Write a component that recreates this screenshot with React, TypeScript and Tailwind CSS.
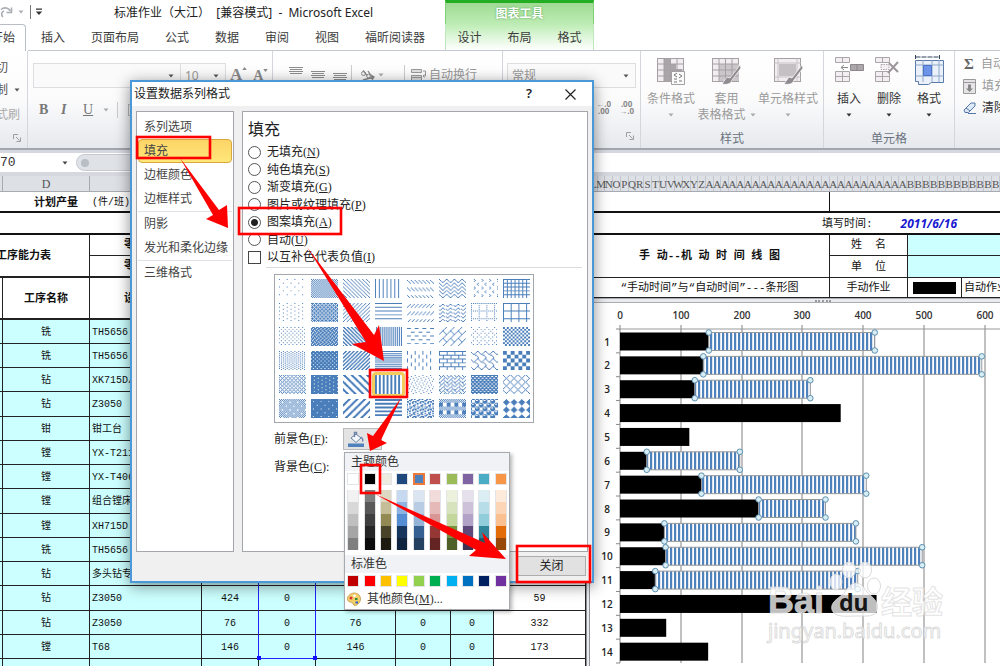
import React, { useState } from "react";
import clsx from "clsx";

const ui = "font-['Noto_Sans','Noto_Sans_CJK_SC',sans-serif]";
const song = "font-['Liberation_Serif','Noto_Sans_CJK_SC',serif]";
const cellFont = "font-['Liberation_Mono','Noto_Sans_CJK_SC',monospace]";

function Caret({ className = "text-[#555]" }: { className?: string }) {
  return (
    <svg viewBox="0 0 6 4" className={clsx("h-1 w-1.5 shrink-0", className)} fill="currentColor" aria-hidden="true">
      <path d="M0.5 0.5h5L3 3.5z" />
    </svg>
  );
}

function Launcher() {
  return (
    <svg viewBox="0 0 8 8" className="size-2" fill="none" stroke="#9a9da2" aria-hidden="true">
      <path d="M0.5 5V0.5H5M3 3l3.5 3.5M7.500 3.500v4h-4" />
    </svg>
  );
}

/* ---------- Title bar and tabs ---------- */

const tabs = ["插入", "页面布局", "公式", "数据", "审阅", "视图", "福昕阅读器"];
const chartTabs = ["设计", "布局", "格式"];

function Header() {
  return (
    <header className={clsx("flex h-[51px] shrink-0 bg-white text-[12px] text-[#3c3c3c]", ui)}>
      <div className="flex w-[445px] shrink-0 flex-col">
        <div className="flex h-6 items-center whitespace-nowrap">
          <svg viewBox="0 0 14 12" className="h-3 w-3.5" fill="none" stroke="#a9adb3" strokeWidth="1.6" aria-hidden="true">
            <path d="M1 3.500C4 1 9 1.500 10 5M11.500 1.500v5H6.500M3 11c-2-2-2-5 1-6" />
          </svg>
          <Caret className="ml-1 text-[#a9adb3]" />
          <span className="ml-1.5 h-3.5 w-px bg-[#777]" />
          <svg viewBox="0 0 8 8" className="ml-1 size-2" fill="#333" aria-hidden="true">
            <path d="M1 0.500h6v1.200H1zM0.800 3.500h6.400L4 7z" />
          </svg>
          <h1 className="ml-[71px] pt-px text-[12px] text-[#222]">
            标准作业（大江）&nbsp; [兼容模式]&nbsp; -&nbsp; Microsoft Excel
          </h1>
        </div>
        <nav className="flex flex-1">
          <button className="-ml-[22px] mr-0.5 h-full shrink-0 rounded-t-sm border border-b-0 border-[#b9bec6] bg-white pl-3 pr-2.5">
            开始
          </button>
          {tabs.map((t) => (
            <button key={t} className="h-full shrink-0 whitespace-nowrap border-b border-[#c3c7cf] px-[13px] pt-0.5">
              {t}
            </button>
          ))}
          <span className="flex-1 border-b border-[#c3c7cf]" />
        </nav>
      </div>
      <div className="flex w-[149px] shrink-0 flex-col border-b border-[#c3c7cf]">
        <div className="flex h-6 items-center justify-center border-x border-t-3 border-x-[#7fd077] border-t-[#22ad22] bg-linear-to-b from-[#9fda94] to-[#bdecb4] font-bold text-white [text-shadow:0_0_2px_#4a9a46]">
          图表工具
        </div>
        <div className="flex flex-1 justify-center border-x border-[#bfe8ba] bg-linear-to-b from-[#bdecb4] to-white">
          {chartTabs.map((t) => (
            <button key={t} className="h-full shrink-0 whitespace-nowrap px-[13px] pt-0.5">
              {t}
            </button>
          ))}
        </div>
      </div>
      <div className="flex-1 border-b border-[#c3c7cf]" />
    </header>
  );
}

/* ---------- Ribbon ---------- */

function GridIcon({ kind }: { kind: "cond" | "table" | "cell" }) {
  return (
    <svg viewBox="0 0 30 28" className="h-7 w-[30px]" fill="none" stroke="#a5a0a4" aria-hidden="true">
      <rect x="1.500" y="1.500" width="26" height="23" fill="#f1edf0" />
      {kind === "cond" && <path d="M8 2h6v5h6v5h6v6H14v6H8z" fill="#a9a5a8" stroke="none" />}
      {kind === "table" && <path d="M8 7h20v17H8z" fill="#cac6c9" stroke="none" />}
      {kind !== "cell" && <path d="M8 1.500v23M14.500 1.500v23M21 1.500v23M1.500 7h26M1.500 13h26M1.500 19h26" />}
      {kind === "cell" && (
        <>
          <path d="M5 1.500v23M24 1.500v23M1.500 6h26M1.500 20h26" stroke="#c5c1c4" />
          <path d="M6 7h17v12H6z" fill="#c4c0c3" stroke="none" />
        </>
      )}
      {kind === "cond" ? (
        <>
          <path d="M15.500 14.500h13v13h-13z" fill="#fafafa" />
          <path d="M21 16l-3 2 3 2M23 17l3 2-3 2M18 22h3M18 25h3M23 24h3" stroke="#777" />
        </>
      ) : (
        <path d="M29 8L19 21l-3-1-5 7c5 1 9 0 10-4L30 11z" fill="#8f8c8f" stroke="#fff" strokeWidth="0.7" />
      )}
    </svg>
  );
}

function CellsIcon({ kind }: { kind: "insert" | "delete" | "format" }) {
  if (kind === "format")
    return (
      <svg viewBox="0 0 30 30" className="size-[30px]" fill="none" stroke="#5a7aa8" aria-hidden="true">
        <path d="M1.500 0v4M25.500 0v4M1.500 2h24" stroke="#31445f" strokeDasharray="5 1" />
        <path d="M1.500 5.500h28v22h-12l-3 2h-10v-3h-3z" fill="#eaf1fa" />
        <path d="M1.500 10h28M1.500 21h28M9 5v22M18 5v22M25 5v22" stroke="#8fa8cb" />
        <path d="M9.500 10.500h8v10h-8z" fill="#6d94e8" stroke="#4a73c8" />
      </svg>
    );
  return (
    <svg viewBox="0 0 30 28" className="h-[30px] w-[30px]" fill="#f3eef1" stroke="#aaa5a9" aria-hidden="true">
      <path d="M1.500 1.500h14v5h-14zM8.500 1.500v5M1.500 15.500h14v10h-14zM8.500 15.500v10M1.500 20.500h14" />
      {kind === "insert" ? (
        <>
          <path d="M16.500 8.500h13v6h-13zM23 8.500v6" fill="#aba7aa" stroke="#8c888b" />
          <path d="M14 11.500H7M10 9l-3 2.500 3 2.500" fill="none" stroke="#888" />
        </>
      ) : (
        <>
          <path d="M7 8.500h8v5H7z" strokeDasharray="1.500 1" />
          <path d="M15 7l9 9M24 6l-10 11" fill="none" stroke="#9b979a" strokeWidth="2" />
        </>
      )}
    </svg>
  );
}

function BigButton({ icon, lines, muted }: { icon: React.ReactNode; lines: string[]; muted?: boolean }) {
  return (
    <button className={clsx("flex flex-col items-center whitespace-nowrap", muted ? "text-[#9a9a9a]" : "text-[#333]")}>
      {icon}
      <span className="mt-1.5 leading-4">{lines[0]}</span>
      {lines[1] ? (
        <span className="flex items-center gap-1 leading-4">
          {lines[1]}
          <Caret className="text-[#aaa]" />
        </span>
      ) : (
        <span className="flex h-4 items-center">
          <Caret className={muted ? "text-[#aaa]" : "text-[#333]"} />
        </span>
      )}
    </button>
  );
}

function Combo({ label, value, className }: { label: string; value: string; className: string }) {
  return (
    <label className={clsx("flex h-[25px] items-center border border-[#dcdee2] bg-[#fafafa] pl-1 pr-1.5", className)}>
      <select aria-label={label} className="h-full min-w-0 flex-1 appearance-none bg-transparent text-[12px] text-[#999]">
        <option>{value}</option>
      </select>
      <Caret />
    </label>
  );
}

function AlignIcon({ className }: { className: string }) {
  return (
    <svg viewBox="0 0 14 8" className={clsx("h-2 w-3.5", className)} stroke="#8e8e8e" aria-hidden="true">
      <path d="M0 0.500h14M1 2.500h12M0 4.500h14M1 6.500h12" />
    </svg>
  );
}

const group = "flex shrink-0 flex-col border-r border-[#d3d6db]";

function Ribbon() {
  return (
    <section
      className={clsx(
        "flex h-[99px] shrink-0 overflow-hidden border-b-2 border-[#a3a7ad] bg-linear-to-b from-white via-[#fbfbfc] to-[#e6e9ed] text-[12px]",
        ui
      )}
    >
      <div className={clsx(group, "w-7 overflow-hidden pt-2 text-[#555]")}>
        <button className="-ml-4 flex h-4 w-10">剪切</button>
        <button className="-ml-4 mt-[7px] flex h-4 w-12 items-center gap-1.5">
          复制
          <Caret />
        </button>
        <button className="-ml-4 mt-2 flex h-4 w-12 text-[#aaa]">格式刷</button>
        <span className="mr-1.5 mt-3 self-end">
          <Launcher />
        </span>
      </div>

      <div className={clsx(group, "w-[245px] pl-[5px] pt-3")}>
        <div className="flex items-start">
          <Combo label="字体" value="" className="w-[148px]" />
          <Combo label="字号" value="10" className="w-[45px] border-l-0" />
          <button className="ml-1 flex items-start font-['Liberation_Serif',serif] text-[17px] font-bold leading-6 text-[#8a8a8a]">
            A
            <svg viewBox="0 0 6 4" className="mt-1 h-[3px] w-[5px]" fill="currentColor" aria-hidden="true">
              <path d="M0 4h6L3 0z" />
            </svg>
          </button>
          <button className="ml-1.5 flex items-start font-['Liberation_Serif',serif] text-[14px] font-bold leading-[26px] text-[#8a8a8a]">
            A
            <svg viewBox="0 0 6 4" className="mt-1.5 h-[3px] w-[5px]" fill="currentColor" aria-hidden="true">
              <path d="M0 0h6L3 4z" />
            </svg>
          </button>
        </div>
        <div className="mt-2.5 flex items-center pl-1.5 font-['Liberation_Serif',serif] text-[14px] text-[#777]">
          <button className="w-[22px] text-left font-bold">B</button>
          <button className="w-[22px] text-left font-bold italic">I</button>
          <button className="w-5 text-left underline">U</button>
          <Caret className="text-[#aaa]" />
          <span className="ml-2 h-4 w-px bg-[#ccc]" />
          <span className="ml-2.5 size-3 border border-[#bbb]" />
        </div>
      </div>

      <div className={clsx(group, "w-[230px] pl-4 pt-3")}>
        <div className="flex h-6 items-center">
          <AlignIcon className="mb-2" />
          <AlignIcon className="ml-2" />
          <AlignIcon className="-mb-1 ml-2" />
          <span className="ml-1 h-5 w-px bg-[#ccc]" />
          <svg viewBox="0 0 16 14" className="ml-2 h-3.5 w-4" fill="none" stroke="#8a8a8a" aria-hidden="true">
            <circle cx="3.500" cy="5.500" r="2" />
            <path d="M3 2.500l4 5M8 3l4 6M3 12l11-3M11 7l3 2-2 3" strokeWidth="1.300" />
            <circle cx="8.500" cy="8" r="1.800" />
          </svg>
          <Caret className="ml-0.5 text-[#aaa]" />
          <span className="ml-5 h-5 w-px bg-[#ccc]" />
          <button className="ml-1.5 flex items-center gap-0.5 whitespace-nowrap text-[#999]">
            <svg viewBox="0 0 16 14" className="h-3.5 w-4" fill="#e2e2e2" stroke="#999" aria-hidden="true">
              <path d="M0.500 1.500h10v3h-10zM0.500 7.500h10v2h-10zM0.500 9.500h10v3h-10z" />
              <path d="M12 3h2.500v5H12M13.500 6.500L12 8l1.500 1.500" fill="none" />
            </svg>
            自动换行
          </button>
        </div>
      </div>

      <div className={clsx(group, "w-[138px] px-1 pt-3")}>
        <Combo label="数字格式" value="常规" className="w-full" />
        <div className="mt-3 flex justify-end gap-2 pr-0.5 font-['Noto_Sans',sans-serif] text-[8px] font-bold leading-[7px] text-[#8a8a8a]">
          <button>
            ←.0
            <br />
            .00
          </button>
          <button>
            .00
            <br />
            →.0
          </button>
        </div>
        <span className="mr-0.5 mt-auto self-end pb-2">
          <Launcher />
        </span>
      </div>

      <div className={clsx(group, "w-[183px] pt-1.5")}>
        <div className="flex flex-1 justify-between pl-1.5 pr-[5px]">
          <BigButton muted icon={<GridIcon kind="cond" />} lines={["条件格式"]} />
          <BigButton muted icon={<GridIcon kind="table" />} lines={["套用", "表格格式"]} />
          <BigButton muted icon={<GridIcon kind="cell" />} lines={["单元格样式"]} />
        </div>
        <div className="h-[17px] text-center leading-4 text-[#6b7280]">样式</div>
      </div>

      <div className={clsx(group, "w-[131px] pt-1")}>
        <div className="flex flex-1 justify-between px-2.5">
          <BigButton icon={<CellsIcon kind="insert" />} lines={["插入"]} />
          <BigButton icon={<CellsIcon kind="delete" />} lines={["删除"]} />
          <BigButton icon={<CellsIcon kind="format" />} lines={["格式"]} />
        </div>
        <div className="h-[17px] text-center leading-4 text-[#6b7280]">单元格</div>
      </div>

      <div className="flex min-w-0 flex-1 flex-col gap-1 overflow-hidden pl-2 pt-1 text-[#999]">
        <button className="flex h-[18px] items-center gap-1.5 whitespace-nowrap">
          <span className="w-3 shrink-0 text-center font-['Liberation_Serif',serif] text-[15px] font-bold text-[#666]">Σ</span>
          自动求和
        </button>
        <button className="flex h-[18px] items-center gap-1.5 whitespace-nowrap">
          <svg viewBox="0 0 13 15" className="h-[15px] w-[13px] shrink-0" fill="#e6e4e6" stroke="#999" aria-hidden="true">
            <path d="M0.500 0.500h12v14h-12zM0.500 3.500h12" />
            <path d="M5 5.500h3v4h2l-3.500 3.500L3 9.500h2z" fill="#888" stroke="none" />
          </svg>
          填充
        </button>
        <button className="flex h-[18px] items-center gap-1.5 whitespace-nowrap text-[#333]">
          <svg viewBox="0 0 13 12" className="h-3 w-[13px] shrink-0" fill="#dfeaf8" stroke="#5577a8" aria-hidden="true">
            <path d="M1 8l7-7h4v3l-6.500 6.500H2z" />
            <path d="M3 6l4 3M5 11.500h8" />
          </svg>
          清除
        </button>
      </div>
    </section>
  );
}

function FormulaBar() {
  return (
    <div className="flex h-[26px] shrink-0 items-center border-b-4 border-t-3 border-[#d5d9df] bg-white">
      <input
        aria-label="名称框"
        defaultValue="70"
        className="h-full w-[62px] text-[13px] text-[#333] outline-none font-['Liberation_Mono',monospace]"
      />
      <Caret className="text-[#444]" />
      <div className="ml-2 flex h-[17px] w-[510px] items-center rounded-l-full border border-[#c5c9cf] bg-[#dfe2e7] pl-1">
        <span className="size-2 rounded-full bg-[#b9bdc4]" />
      </div>
      <input aria-label="编辑栏" className="h-full min-w-0 flex-1 bg-white outline-none" />
    </div>
  );
}

/* ---------- Worksheet, left pane ---------- */

type Row = [string, string, string?, string?, string?, string?, string?, string?];

const rows: Row[] = [
  ["铣", "TH5656"],
  ["铣", "TH5656"],
  ["钻", "XK715D/1"],
  ["钻", "Z3050"],
  ["钳", "钳工台"],
  ["镗", "YX-T211"],
  ["镗", "YX-T406"],
  ["镗", "组合镗床"],
  ["镗", "XH715D"],
  ["铣", "TH5656"],
  ["钻", "多头钻专机"],
  ["钻", "Z3050", "424", "0", "424", "0", "0", "59"],
  ["钻", "Z3050", "76", "0", "76", "0", "0", "332"],
  ["镗", "T68", "146", "0", "146", "0", "0", "173"],
  ["", ""],
];

const line = "border-b border-r border-[#222]";

function LeftPane() {
  return (
    <div className="w-[586px] shrink-0 overflow-hidden">
      <table className={clsx("w-[586px] table-fixed border-separate border-spacing-0 text-[10px] leading-3 text-[#111]", cellFont)}>
        <colgroup>
          <col className="w-[3px]" />
          <col className="w-[87px]" />
          <col className="w-28" />
          <col className="w-[57px]" />
          <col className="w-[57px]" />
          <col className="w-20" />
          <col className="w-[55px]" />
          <col className="w-[43px]" />
          <col className="w-[92px]" />
        </colgroup>
        <thead>
          <tr className="h-4 bg-[#dde0e5] font-['Liberation_Serif',serif] text-[12px] text-[#555]">
            {["", "D", "E", "F", "G", "H", "I", "J", "K"].map((c, i) => (
              <th key={i} className="border-b border-r border-[#a8acb2] p-0 font-normal">
                {c}
              </th>
            ))}
          </tr>
        </thead>
        <tbody>
          <tr className="h-[21px] bg-white text-[11px]">
            <td colSpan={2} className="border-b-2 border-[#111] p-0 pr-3 pt-0.5 text-right font-bold">
              计划产量
            </td>
            <td colSpan={7} className="border-b-2 border-[#111] p-0 pl-0.5 pt-0.5 text-[10px]">
              (件/班)
            </td>
          </tr>
          <tr className="h-[22px] bg-white">
            <td colSpan={9} className="border-b-2 border-[#111] p-0" />
          </tr>
          <tr className="h-[21px] bg-white text-[11px] font-bold">
            <td rowSpan={2} colSpan={2} className={clsx(line, "whitespace-nowrap border-b-2 p-0 -indent-1")}>
              工序能力表
            </td>
            <td colSpan={7} className={clsx(line, "p-0 pl-[34px]")}>
              零件名称
            </td>
          </tr>
          <tr className="h-[22px] bg-white text-[11px] font-bold">
            <td colSpan={7} className={clsx(line, "border-b-2 p-0 pl-[34px]")}>
              零件号
            </td>
          </tr>
          <tr className="h-[42px] bg-white text-center text-[11px] font-bold">
            <td className={clsx(line, "border-b-2 p-0")} />
            <td className={clsx(line, "border-b-2 p-0 pt-0.5")}>工序名称</td>
            <td className={clsx(line, "border-b-2 p-0 pl-[34px] pt-0.5 text-left")}>设备编号</td>
            <td colSpan={6} className={clsx(line, "border-b-2 p-0")} />
          </tr>
          {rows.map((r, i) => (
            <tr key={i} className={clsx("bg-[#ccffff] text-center", i % 4 === 3 ? "h-[25px]" : "h-6")}>
              <td className={clsx(line, "p-0")} />
              {Array.from({ length: 8 }, (_, c) => (
                <td
                  key={c}
                  className={clsx(
                    "border-b p-0 pt-0.5",
                    c === 1 && "whitespace-nowrap pl-0.5 text-left",
                    c === 7 && "bg-white",
                    (c === 2 || c === 3) && i < 14 ? "border-r border-r-[#2222ff]" : "border-r border-r-[#222]",
                    i === 13 && c === 3 ? "border-b-[#2222ff]" : "border-b-[#222]",
                    i === 13 && c === 3 && "relative"
                  )}
                >
                  {r[c] ?? ""}
                  {i === 13 && c === 3 && (
                    <>
                      <span className="absolute -bottom-0.5 -left-0.5 size-1 bg-[#1111ff]" />
                      <span className="absolute -bottom-0.5 -right-0.5 size-1 bg-[#1111ff]" />
                    </>
                  )}
                </td>
              ))}
            </tr>
          ))}
        </tbody>
      </table>
    </div>
  );
}

/* ---------- Worksheet, right pane ---------- */

const columnLetters = ("LMNOPQRSTUVWXYZ" + "A".repeat(26) + "B".repeat(12)).split("");

function RightTable() {
  const b = "border-b border-r border-[#222] p-0";
  return (
    <table className={clsx("w-full table-fixed border-separate border-spacing-0 bg-white text-[11px] leading-3 text-[#111]", cellFont)}>
      <colgroup>
        <col className="w-[240px]" />
        <col className="w-[78px]" />
        <col className="w-[54px]" />
        <col />
      </colgroup>
      <tbody>
        <tr className="h-[21px]">
          <td className="border-b-2 border-r border-[#111] p-0" />
          <td colSpan={3} className="border-b-2 border-[#111] p-0" />
        </tr>
        <tr className="h-[22px]">
          <td colSpan={4} className="border-b-2 border-[#111] p-0 pt-0.5">
            <div className="flex gap-7 whitespace-nowrap pl-[232px]">
              <span>填写时间:</span>
              <span className="font-['Noto_Sans',sans-serif] text-[12px] font-bold italic text-[#1818d0]">2011/6/16</span>
            </div>
          </td>
        </tr>
        <tr className="h-[21px] text-center">
          <td rowSpan={2} className={clsx(b, "whitespace-pre font-bold")}>
            手 动--机 动 时 间 线 图
          </td>
          <td className={clsx(b, "whitespace-pre")}>姓  名</td>
          <td colSpan={2} className="border-b border-[#222] bg-[#ccffff] p-0" />
        </tr>
        <tr className="h-[22px] text-center">
          <td className={clsx(b, "whitespace-pre")}>单  位</td>
          <td colSpan={2} className="border-b border-[#222] bg-[#ccffff] p-0" />
        </tr>
        <tr className="h-5 text-center">
          <td className={clsx(b, "whitespace-nowrap")}>“手动时间”与“自动时间”---条形图</td>
          <td className={b}>手动作业</td>
          <td className={b}>
            <div className="mx-auto h-3 w-[43px] bg-black" />
          </td>
          <td className="overflow-hidden whitespace-nowrap border-b border-[#222] p-0 pl-0.5 text-left">自动作业</td>
        </tr>
      </tbody>
    </table>
  );
}

// [manual time, end of automatic time]
const bars: [number, number?][] = [
  [146, 419],
  [137, 595],
  [123, 313],
  [363],
  [114],
  [44, 197],
  [134, 405],
  [228, 338],
  [73, 388],
  [75, 497],
  [58, 391],
  [422],
  [76],
  [145],
];

const X0 = 30;
const UNIT = 0.608;
const ROW = 23.86;

function Chart() {
  return (
    <svg role="img" aria-label="条形图" className="h-[364px] w-full bg-white font-['Open_Sans',sans-serif] text-[10px] font-semibold">
      <defs>
        <pattern id="dark-vertical" width="4" height="4" patternUnits="userSpaceOnUse">
          <rect width="4" height="4" fill="#fff" />
          <rect width="2" height="4" fill="#4f81bd" />
          <rect x="2" width="0.500" height="4" fill="#b9cde5" />
        </pattern>
      </defs>
      {[0, 1, 2, 3, 4, 5, 6].map((n) => {
        const x = Math.round(X0 + n * 100 * UNIT);
        return (
          <g key={n}>
            <path d={`M${x} 22V360`} stroke="#a6a6a6" strokeWidth="1.400" />
            <text x={x} y="16" textAnchor="middle" fill="#333">
              {n * 100}
            </text>
          </g>
        );
      })}
      <path d={`M${X0} 26H2000`} stroke="#999" />
      {bars.map(([a, b], i) => {
        const y = 29.5 + i * ROW;
        const xa = X0 + a * UNIT;
        const xb = X0 + (b ?? 0) * UNIT;
        return (
          <g key={i}>
            <path d={`M${X0 - 4} ${26 + i * ROW}h4`} stroke="#888" />
            <text x="17" y={y + 13} textAnchor="middle" fill="#222">
              {i + 1}
            </text>
            <rect x={X0} y={y} width={a * UNIT} height="18" fill="#000" />
            {b && (
              <>
                <rect x={xa} y={y} width={xb - xa} height="18" fill="url(#dark-vertical)" stroke="#999" />
                {[
                  [xa, y],
                  [xb, y],
                  [xa, y + 18],
                  [xb, y + 18],
                ].map(([cx, cy], k) => (
                  <circle key={k} cx={cx} cy={cy} r="2.800" fill="#d9eef4" stroke="#5b8fb0" />
                ))}
              </>
            )}
          </g>
        );
      })}
      <path d="M26 360h4" stroke="#888" />
    </svg>
  );
}

function RightPane() {
  return (
    <div className="flex min-w-0 flex-1 flex-col">
      <div className="flex h-4 shrink-0 border-b border-[#a8acb2] bg-[#dde0e5] font-['Liberation_Serif',serif] text-[11px] leading-[17px] text-[#555]">
        {columnLetters.map((c, i) => (
          <span key={i} className="flex min-w-0 flex-1 justify-center border-r border-[#c3c6cc]">
            {c}
          </span>
        ))}
      </div>
      <RightTable />
      <div className="flex h-[5px] shrink-0 items-center justify-center border-y border-[#aaadb2] bg-[#e9ebee]">
        <span className="ml-14 w-4 border-t-2 border-dotted border-[#999]" />
      </div>
      <Chart />
    </div>
  );
}

/* ---------- Pattern swatches ---------- */

const patterns: string[][] = [
  ["x.......", "........", "........", "........", "....x...", "........", "........", "........"],
  ["x.", ".x"],
  ["x...", ".x..", "..x.", "...x"],
  ["x..."],
  ["........", "x...x...", ".x...x..", "..x...x.", "...x...x", "........", "........", "........"],
  ["x......x", ".x....x.", "..x..x..", "...xx..."],
  ["...x....", "....x...", "...x....", "........", ".......x", "......x.", ".......x", "........"],
  ["xxxx", "x...", "x...", "x..."],

  ["x.......", "........", "....x...", "........"],
  ["xxx.", ".x.x", "x.xx", ".x.x"],
  ["...x", "..x.", ".x..", "x..."],
  ["x", ".", ".", "."],
  ["........", "...x...x", "..x...x.", ".x...x..", "x...x...", "........", "........", "........"],
  ["........", "...xx...", "..x..x.x", "xx......"],
  ["x.x.x.x.", "........", "x.......", "........", "x.......", "........", "x.......", "........"],
  ["xxxxxxxx", "x.......", "x.......", "x.......", "x.......", "x.......", "x.......", "x......."],

  ["x...", "....", "..x.", "...."],
  [".xxx", "xx.x", "x.xx", "xxx."],
  ["xx..", ".xx.", "..xx", "x..x"],
  [".x"],
  ["........", "xxxx....", "........", "........", "........", "....xxxx", "........", "........"],
  [".......x", "......x.", ".....x..", "....x...", "...xx...", "..x..x..", ".x....x.", "x......x"],
  ["x.......", "........", "..x...x.", "........", "....x...", "........", "..x...x.", "........"],
  ["xx..", "xx..", "..xx", "..xx"],

  ["x...", "..x."],
  [".xxx", "xxxx", "xx.x", "xxxx"],
  ["..xx", ".xx.", "xx..", "x..x"],
  ["x", "."],
  ["x.......", "x.......", "x.......", "x.......", "....x...", "....x...", "....x...", "....x..."],
  ["xxxxxxxx", "x.......", "x.......", "x.......", "xxxxxxxx", "....x...", "....x...", "....x..."],
  ["......xx", "x....x..", ".x..x...", "..xx....", "....xx..", "......x.", ".......x", ".......x"],
  ["xxxx....", "xxxx....", "xxxx....", "xxxx....", "....xxxx", "....xxxx", "....xxxx", "....xxxx"],

  ["x.x.", ".x..", "x.x.", "...x"],
  ["xxxxxxxx", "xxx.xxxx", "xxxxxxxx", "xxxxxxx."],
  ["xxx.....", ".xxx....", "..xxx...", "...xxx..", "....xxx.", ".....xxx", "x.....xx", "xx.....x"],
  ["xx.."],
  ["x.......", "....x...", ".x......", "......x.", "...x....", ".......x", "..x.....", ".....x.."],
  ["x...x...", ".x.x.x..", "..x...x.", ".x...x.x", "x...x...", "...x.x..", "..x...x.", "xx...x.x"],
  ["xxxx", "x..x", "xxxx", ".xx."],
  ["x.....x.", ".x...x..", "..x.x...", "...x....", "..x.x...", ".x...x..", "x.....x.", ".......x"],

  ["x.x.x.x.", ".x.x.x.x", "x.x.x.x.", ".x...x.x", "x.x.x.x.", ".x.x.x.x", "x.x.x.x.", ".x.x.x.."],
  ["xxxxxxxx", "xxxxxxxx", "xx.xxxxx", "xxxxxxxx", "xxxxxxxx", "xxxxxxxx", "xxxxxx.x", "xxxxxxxx"],
  [".....xxx", "....xxx.", "...xxx..", "..xxx...", ".xxx....", "xxx.....", "xx.....x", "x.....xx"],
  ["x", "x", ".", "."],
  ["x...xx.x", "..xxx...", "xx.x..xx", "xx...xx.", "..xx.xx.", "x.xx....", "x.....xx", "..xx..xx"],
  ["x.x.x.x.", ".x.x.x.x", "x.x.x.x.", ".x.x.x.x", "xxxx....", "xxxx....", "xxxx....", "xxxx...."],
  [".xxx.xxx", "x...x..x", "x...xxxx", "x...xxxx", ".xxx.xxx", "x..xx...", "xxxxx...", "xxxxx..."],
  ["...x....", "..xxx...", ".xxxxx..", "xxxxxxx.", ".xxxxx..", "..xxx...", "...x....", "........"],
];

function PatternSwatch({ rows: bitmap, index }: { rows: string[]; index: number }) {
  const cells: string[] = [];
  for (let y = 0; y < 20; y++)
    for (let x = 0; x < 28; x++) {
      const r = bitmap[y % bitmap.length];
      if (r[x % r.length] === "x") cells.push(`M${x} ${y}h1v1h-1z`);
    }
  return (
    <svg viewBox="0 0 28 20" preserveAspectRatio="none" className="h-[19px] w-[27px]" aria-hidden="true">
      <path key={index} d={cells.join("")} fill="#4a7ebb" />
    </svg>
  );
}

/* ---------- Colour menu ---------- */

const theme: string[][] = [
  ["#ffffff", "#f2f2f2", "#d8d8d8", "#bfbfbf", "#a5a5a5", "#7f7f7f"],
  ["#000000", "#7f7f7f", "#595959", "#3f3f3f", "#262626", "#0c0c0c"],
  ["#eeece1", "#ddd9c3", "#c4bd97", "#938953", "#494429", "#1d1b10"],
  ["#1f497d", "#c6d9f0", "#8db3e2", "#548dd4", "#17365d", "#0f243e"],
  ["#4f81bd", "#dbe5f1", "#b8cce4", "#95b3d7", "#366092", "#244061"],
  ["#c0504d", "#f2dcdb", "#e5b9b7", "#d99694", "#953734", "#632423"],
  ["#9bbb59", "#ebf1dd", "#d7e3bc", "#c3d69b", "#76923c", "#4f6128"],
  ["#8064a2", "#e5e0ec", "#ccc1d9", "#b2a2c7", "#5f497a", "#3f3151"],
  ["#4bacc6", "#dbeef3", "#b7dde8", "#92cddc", "#31859b", "#205867"],
  ["#f79646", "#fdeada", "#fbd5b5", "#fac08f", "#e36c09", "#974806"],
];
const standard = ["#c00000", "#ff0000", "#ffc000", "#ffff00", "#92d050", "#00b050", "#00b0f0", "#0070c0", "#002060", "#7030a0"];

function ColorMenu() {
  return (
    <div
      className={clsx(
        "absolute left-[344px] top-[452px] w-[166px] border border-[#a7abb0] bg-white text-[12px] text-[#333] shadow-[2px_2px_4px_rgba(0,0,0,0.3)]",
        ui
      )}
    >
      <div className="h-[18px] bg-[#f0f2f5] pl-1.5 leading-[18px]">主题颜色</div>
      <div className="grid grid-cols-10 justify-items-center pb-[3px] pt-0.5">
        {theme.map(([base, ...tints], i) => (
          <div key={i} className="flex flex-col gap-[5px]">
            <button
              aria-label={base}
              className={clsx("size-3", i === 4 ? "border-2 border-[#f07a3c]" : "border border-[#e2e4e7]")}
              style={{ background: base }}
            />
            <div className="border-x border-[#e2e4e7]">
              {tints.map((t) => (
                <button key={t} aria-label={t} className="block h-3 w-2.5" style={{ background: t }} />
              ))}
            </div>
          </div>
        ))}
      </div>
      <div className="mt-0.5 h-[18px] bg-[#f0f2f5] pl-1.5 leading-[18px]">标准色</div>
      <div className="grid grid-cols-10 justify-items-center py-0.5">
        {standard.map((c) => (
          <button key={c} aria-label={c} className="size-3 border border-[#e2e4e7]" style={{ background: c }} />
        ))}
      </div>
      <button className={clsx("flex h-5 items-center gap-1.5 pl-0.5", song)}>
        <svg viewBox="0 0 14 14" className="size-3.5" aria-hidden="true">
          <path d="M7 1c4 0 6.500 2.500 6.500 6S10 13.500 8 13.500 6.500 11 5 10.500 1 10 0.500 7.500 3 1 7 1z" fill="#f2cf6b" stroke="#b98a2f" strokeWidth="0.700" />
          <circle cx="4" cy="6" r="1.500" fill="#d33" />
          <circle cx="7.500" cy="3.800" r="1.300" fill="#fff" />
          <path d="M8 6h2.500v2H8z" fill="#2f8a3c" />
          <path d="M8.500 9.500h2.500v2H8.500z" fill="#2a5bc8" />
        </svg>
        <span>
          其他颜色(<u>M</u>)...
        </span>
      </button>
    </div>
  );
}

/* ---------- Dialog ---------- */

const navItems = ["系列选项", "填充", "边框颜色", "边框样式", "阴影", "发光和柔化边缘", "三维格式"];
const fills: [string, string][] = [
  ["无填充", "N"],
  ["纯色填充", "S"],
  ["渐变填充", "G"],
  ["图片或纹理填充", "P"],
  ["图案填充", "A"],
  ["自动", "U"],
];

function Dialog() {
  const [fill, setFill] = useState("图案填充");
  return (
    <div
      role="dialog"
      aria-label="设置数据系列格式"
      className={clsx(
        "absolute left-[130px] top-20 flex h-[503px] w-[464px] flex-col border-2 border-[#4a98d8] bg-[#f0f0f0] text-[12px] text-[#222] shadow-[0_3px_14px_rgba(0,0,0,0.45)]",
        ui
      )}
    >
      <div className="flex h-6 shrink-0 items-center bg-white pl-0.5 pr-4">
        <h2 className="flex-1">设置数据系列格式</h2>
        <button aria-label="帮助" className="mr-1 w-6 text-[13px] font-semibold">
          ?
        </button>
        <button aria-label="关闭窗口" className="ml-5">
          <svg viewBox="0 0 11 11" className="size-[11px]" stroke="#222" strokeWidth="1.200" aria-hidden="true">
            <path d="M0.500 0.500l10 10M10.500 0.500l-10 10" />
          </svg>
        </button>
      </div>
      <div className="flex flex-1 gap-2 px-1 pt-[5px]">
        <nav className="flex w-[98px] shrink-0 flex-col self-stretch border border-[#a3a6ab] bg-white px-px pt-[3px]">
          {navItems.map((n) => (
            <React.Fragment key={n}>
              <button
                className={clsx(
                  "h-6 shrink-0 whitespace-nowrap border pl-[5px] text-left text-[#444]",
                  n === "填充"
                    ? "rounded-sm border-[#d9a93c] bg-linear-to-b from-[#fcd467] to-[#ffe779]"
                    : "border-transparent"
                )}
              >
                {n}
              </button>
              {(n === "边框样式" || n === "发光和柔化边缘") && <hr className="border-[#dfe3e8]" />}
            </React.Fragment>
          ))}
        </nav>
        <section className="flex min-w-0 flex-1 flex-col border border-[#a3a6ab] bg-white px-[5px] pt-1.5">
          <h3 className="text-[16px] leading-[22px]">填充</h3>
          <div className={clsx("mt-1 flex h-[121px] shrink-0 flex-col justify-between", song)}>
            {fills.map(([label, key]) => (
              <label key={key} className="flex h-4 items-center gap-1.5">
                <input
                  type="radio"
                  name="fill"
                  checked={fill === label}
                  onChange={() => setFill(label)}
                  className="size-[13px] appearance-none rounded-full border border-[#555] bg-white checked:bg-[radial-gradient(circle,#222_0_3px,#fff_4px)]"
                />
                <span>
                  {label}(<u>{key}</u>)
                </span>
              </label>
            ))}
            <label className="flex h-4 items-center gap-1.5">
              <input type="checkbox" className="size-[13px] appearance-none border border-[#444] bg-white" />
              <span>
                以互补色代表负值(<u>I</u>)
              </span>
            </label>
          </div>
          <hr className="ml-[18px] mt-0.5 border-[#dcdcdc]" />
          <div className="ml-[26px] mt-1.5 grid w-[260px] grid-cols-8 gap-y-[5px] border border-[#a3a6ab] px-px py-1">
            {patterns.map((p, i) => (
              <button key={i} aria-label={`图案 ${i + 1}`} className="flex h-[19px] items-center justify-center">
                <span className={clsx("block", i === 35 && "rounded-[1px] outline-3 outline-[#f2cd5c]")}>
                  <PatternSwatch rows={p} index={i} />
                </span>
              </button>
            ))}
          </div>
          <div className={clsx("ml-[26px] mt-1 flex h-6 items-center", song)}>
            <span className="w-[69px]">
              前景色(<u>F</u>):
            </span>
            <button aria-label="前景色" className="flex h-[22px] w-[39px] items-center gap-2 border border-[#bbb] bg-[#e3e3e3] pl-1">
              <svg viewBox="0 0 16 16" className="size-4" fill="none" stroke="#6b84a8" aria-hidden="true">
                <path d="M3 7l5-4 5 4-5 4.500z" fill="#f3f7fc" />
                <path d="M6.500 6V1.500h2V4M13 6c2 1.500 2 3 1.500 4.500" strokeWidth="1.400" />
                <path d="M0 12.500h16V16H0z" fill="#4f81bd" stroke="none" />
              </svg>
              <Caret className="text-[#333]" />
            </button>
          </div>
          <div className={clsx("ml-[26px] mt-1 flex h-6 items-center", song)}>
            <span>
              背景色(<u>C</u>):
            </span>
          </div>
        </section>
      </div>
      <div className="flex h-[29px] shrink-0 items-start justify-end px-1.5 pt-1">
        <button className="h-5 w-[69px] border border-[#adadad] bg-[#e1e1e1] leading-4">关闭</button>
      </div>
    </div>
  );
}

/* ---------- Annotations ---------- */

function Annotations() {
  return (
    <svg className="pointer-events-none absolute inset-0 h-full w-full" aria-hidden="true">
      <g fill="none" stroke="#ff0000" strokeWidth="2.600">
        <rect x="137" y="137" width="73" height="21" />
        <rect x="239" y="208" width="102" height="26" />
        <rect x="370" y="370" width="37" height="27" />
        <rect x="361" y="465" width="19" height="28" />
        <rect x="517" y="546" width="73" height="36" />
      </g>
      <g fill="#ff0000">
        <path d="M180 158L219 210 227 205 228 228 206 219 213 215z" />
        <path d="M307 247L374 335 379 325 384 361 352 344 366 342z" />
        <path d="M401 398L381 440 387 443 370 451 367 433 373 436z" />
        <path d="M375 494L485 543 482 532 506 559 469 556 476 550z" />
      </g>
    </svg>
  );
}

function Watermark() {
  return (
    <div className="pointer-events-none absolute left-[768px] top-[560px] w-[200px] select-none font-['Noto_Sans','Noto_Sans_CJK_SC',sans-serif]">
      <div className="flex h-[57px] items-end text-white/75 [-webkit-text-stroke:1px_rgba(215,215,215,0.7)]">
        <span className="w-[57px] font-['Liberation_Sans',sans-serif] text-[36px] font-bold leading-8">Bai</span>
        <svg viewBox="0 0 56 56" className="h-14 w-14" fill="#fff" fillOpacity="0.75" stroke="#d2d2d2" strokeOpacity="0.8" aria-hidden="true">
          <ellipse cx="11" cy="21" rx="6" ry="8" />
          <ellipse cx="24" cy="9" rx="6.500" ry="8" />
          <ellipse cx="40" cy="9" rx="6.500" ry="8" />
          <ellipse cx="49" cy="25" rx="6.500" ry="8" />
          <path d="M31 22c7 0 9 8 14 12s9 9 7 15c-2 7-9 6-20 6s-22 2-25-6c-2-7 5-11 10-15s7-12 14-12z" />
          <text x="14" y="50" fontSize="23" fontWeight="bold" fill="#000" fillOpacity="0.9" stroke="none">
            du
          </text>
        </svg>
        <span className="text-[31px] font-bold leading-8">经验</span>
      </div>
      <div className="mt-0.5 text-[20px] leading-6 text-white/80 [-webkit-text-stroke:1px_rgba(205,205,205,0.7)]">
        jingyan.baidu.com
      </div>
    </div>
  );
}

export default function App() {
  return (
    <div className="relative flex h-screen flex-col overflow-hidden bg-white">
      <Header />
      <Ribbon />
      <FormulaBar />
      <main className="flex min-h-0 flex-1 overflow-hidden">
        <LeftPane />
        <div className="w-1 shrink-0 border-x border-[#8e9197] bg-[#e9ebee]" />
        <RightPane />
      </main>
      <Dialog />
      <ColorMenu />
      <Watermark />
      <Annotations />
    </div>
  );
}
